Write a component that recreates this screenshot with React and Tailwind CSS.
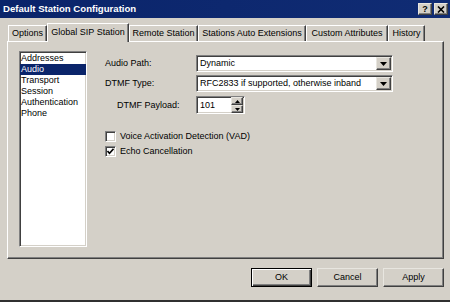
import React, { useState } from "react";

const sunken =
  "border border-t-[#808080] border-l-[#808080] border-b-white border-r-white shadow-[inset_1px_1px_0_#404040,inset_-1px_-1px_0_#d4d0c8]";
const raised =
  "border border-t-[#e8e6e0] border-l-[#e8e6e0] border-b-[#404040] border-r-[#404040] shadow-[inset_-1px_-1px_0_#808080]";

function ArrowBtn() {
  return (
    <div className={`w-[15px] h-[13px] bg-[#d4d0c8] flex items-center justify-center ${raised}`}>
      <svg width="7" height="4" viewBox="0 0 7 4">
        <path d="M0 0h7L3.5 4z" fill="#000" />
      </svg>
    </div>
  );
}

function Combo({ value }) {
  return (
    <div className={`w-[197px] h-[17px] bg-white flex items-center justify-between pl-[3px] pr-[1px] ${sunken}`}>
      <span>{value}</span>
      <ArrowBtn />
    </div>
  );
}

function Check({ checked, label }) {
  return (
    <div className="flex items-center gap-[4px] h-[12px]">
      <div className={`w-[11px] h-[11px] bg-white flex items-center justify-center ${sunken}`}>
        {checked && (
          <svg width="7" height="7" viewBox="0 0 7 7">
            <path d="M0.5 3l2 2.2L6.5 0.8" stroke="#000" strokeWidth="1.6" fill="none" />
          </svg>
        )}
      </div>
      <span>{label}</span>
    </div>
  );
}

const tabs = [
  { name: "Options", w: "w-[39px]" },
  { name: "Global SIP Station", w: "w-[82px]", active: true },
  { name: "Remote Station", w: "w-[69px]" },
  { name: "Stations Auto Extensions", w: "w-[108px]" },
  { name: "Custom Attributes", w: "w-[82px]" },
  { name: "History", w: "w-[37px]" },
];

const sections = ["Addresses", "Audio", "Transport", "Session", "Authentication", "Phone"];

export default function App() {
  const [selected, setSelected] = useState("Audio");
  const [vad, setVad] = useState(false);
  const [echo, setEcho] = useState(true);

  return (
    <div
      className="w-[450px] h-[302px] bg-[#d4d0c8] text-black text-[9px] leading-none flex flex-col border-b-2 border-b-[#303030] overflow-hidden"
      style={{ fontFamily: '"Liberation Sans", Arial, sans-serif' }}
    >
      {/* title bar */}
      <div className="h-[18px] bg-gradient-to-r from-[#0a246a] to-[#102c74] flex items-center justify-between pl-[3px] pr-[2px]">
        <span className="text-white font-bold text-[9.6px]">Default Station Configuration</span>
        <div className="flex gap-[2px]">
          <div className={`w-[14px] h-[12px] bg-[#d4d0c8] flex items-center justify-center font-bold text-[9px] ${raised}`}>?</div>
          <div className={`w-[14px] h-[12px] bg-[#d4d0c8] flex items-center justify-center ${raised}`}>
            <svg width="8" height="7" viewBox="0 0 8 7">
              <path d="M1 0.5l6 6M7 0.5l-6 6" stroke="#000" strokeWidth="1.6" />
            </svg>
          </div>
        </div>
      </div>

      {/* tabs */}
      <div className="flex items-end pl-[8px] mt-[4px] h-[19px] relative z-10">
        {tabs.map((t) =>
          t.active ? (
            <div
              key={t.name}
              className={`${t.w} h-[19px] -mb-[1px] bg-[#d4d0c8] border-l border-t border-r border-l-white border-t-white border-r-[#404040] shadow-[inset_-1px_0_0_#808080] flex items-center justify-center pb-[2px]`}
            >
              {t.name}
            </div>
          ) : (
            <div
              key={t.name}
              className={`${t.w} h-[16px] border-l border-t border-r border-l-white border-t-white border-r-[#404040] shadow-[inset_-1px_0_0_#808080] flex items-center justify-center`}
            >
              {t.name}
            </div>
          )
        )}
      </div>

      {/* panel */}
      <div className="ml-[7px] w-[437px] h-[218px] border border-t-white border-l-white border-b-[#404040] border-r-[#404040] shadow-[inset_-1px_-1px_0_#808080] flex pt-[9px]">
        <div className={`ml-[11px] w-[68px] h-[196px] bg-white pt-[1px] ${sunken}`}>
          {sections.map((s) => (
            <div
              key={s}
              onClick={() => setSelected(s)}
              className={`h-[11px] px-[1px] flex items-center ${
                s === selected ? "bg-[#0a246a] text-white" : ""
              }`}
            >
              {s}
            </div>
          ))}
        </div>

        <div className="ml-[18px] flex flex-col pt-[4px]">
          <div className="flex items-center">
            <span className="w-[91px]">Audio Path:</span>
            <Combo value="Dynamic" />
          </div>
          <div className="flex items-center mt-[3px]">
            <span className="w-[91px]">DTMF Type:</span>
            <Combo value="RFC2833 if supported, otherwise inband" />
          </div>
          <div className="flex items-center mt-[4px]">
            <span className="w-[79px] ml-[12px]">DTMF Payload:</span>
            <div className={`w-[49px] h-[18px] bg-white flex items-center justify-between pl-[3px] pr-[1px] ${sunken}`}>
              <span>101</span>
              <div className="flex flex-col">
                <div className={`w-[12px] h-[8px] bg-[#d4d0c8] flex items-center justify-center ${raised}`}>
                  <svg width="5" height="3" viewBox="0 0 5 3"><path d="M0 3h5L2.5 0z" fill="#000" /></svg>
                </div>
                <div className={`w-[12px] h-[8px] bg-[#d4d0c8] flex items-center justify-center ${raised}`}>
                  <svg width="5" height="3" viewBox="0 0 5 3"><path d="M0 0h5L2.5 3z" fill="#000" /></svg>
                </div>
              </div>
            </div>
          </div>
          <div className="mt-[16px] flex flex-col gap-[3px]">
            <div onClick={() => setVad(!vad)}>
              <Check checked={vad} label="Voice Activation Detection (VAD)" />
            </div>
            <div onClick={() => setEcho(!echo)}>
              <Check checked={echo} label="Echo Cancellation" />
            </div>
          </div>
        </div>
      </div>

      {/* buttons */}
      <div className="flex justify-end gap-[5px] pr-[6px] mt-[9px]">
        <button className="w-[61px] h-[19px] bg-[#d4d0c8] border border-black shadow-[inset_1px_1px_0_#fff,inset_-1px_-1px_0_#404040,inset_-2px_-2px_0_#808080]">
          OK
        </button>
        <button className={`w-[61px] h-[19px] bg-[#d4d0c8] ${raised}`}>Cancel</button>
        <button className={`w-[61px] h-[19px] bg-[#d4d0c8] ${raised}`}>Apply</button>
      </div>
    </div>
  );
}
